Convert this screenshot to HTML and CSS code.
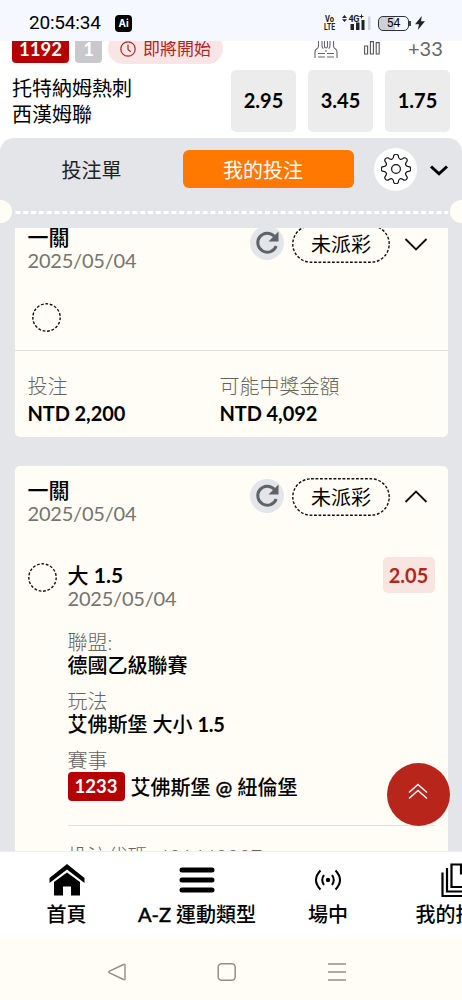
FILE: index.html
```html
<!DOCTYPE html>
<html lang="zh-Hant">
<head>
<meta charset="utf-8">
<title>我的投注</title>
<link rel="stylesheet" href="styles.css">
</head>
<body>
<div class="phone">
  <header class="status">
    <span class="clock">20:54:34</span>
    <span class="ai">Ai</span>
    <svg class="volte" width="12" height="16" viewBox="0 0 12 16"><text x="1" y="7" textLength="9" lengthAdjust="spacingAndGlyphs">Vo</text><text x="0" y="15" textLength="11" lengthAdjust="spacingAndGlyphs">LTE</text></svg>
    <svg class="signal" width="29" height="18" viewBox="0 0 29 18">
      <path d="M2.500 1L5 4H0zM2.500 8L0 5.300H5z" fill="#222"/>
      <text x="6.500" y="8" class="net">4G</text>
      <path d="M17.500 2.500h4M19.500 .5v4" stroke="#222" stroke-width="1"/>
      <path d="M8.500 10h3.500v6H8.500zM14 8.500h3.500V16H14zM19.500 6h3v10h-3z" fill="#222"/>
      <path d="M26 2.500h2.500V16H26z" fill="#cfd2d6"/>
    </svg>
    <span class="battery">54</span><i class="cap"></i>
    <svg class="bolt" width="10" height="14" viewBox="0 0 10 14"><path d="M6.800 0L0 8.200h4L2.800 14L10 5.300H6z" fill="#222"/></svg>
  </header>

  <section class="match">
    <div class="match-top">
      <span class="code">1192</span>
      <span class="code count">1</span>
      <span class="soon">
        <svg width="16" height="16" viewBox="0 0 16 16" fill="none" stroke="#b3261e" stroke-width="1.200"><circle cx="8" cy="8" r="7.200"/><path d="M8 3.500V8.500L10.700 10.700"/></svg>
        即將開始
      </span>
      <svg class="people" width="24" height="20" viewBox="0 0 24 20" fill="none" stroke="#666" stroke-width="1.100"><path d="M4.500 3V8Q4.500 10 2.500 11Q1 12 1 14V20M8 3V7.500Q8 10 9.500 10.500M10.500 3V8Q10.500 10 12 10Q13.500 10 13.500 8V3M16 3V7.500Q16 10 14.500 10.500M19.500 3V8Q19.500 10 21.500 11Q23 12 23 14V20M4 15.500H11M13 15.500H20M4 19H11M13 19H20M12 12V14"/></svg>
      <svg class="bars" width="16" height="15" viewBox="0 0 16 15" fill="none" stroke="#555" stroke-width="1.100"><path d="M.6 5h3v8H.6zM6.400 .6h3V13h-3zM12.200 1.600h3V13h-3z"/></svg>
      <span class="more">+33</span>
    </div>
    <div class="match-main">
      <div class="teams"><div>托特納姆熱刺</div><div>西漢姆聯</div></div>
      <div class="odds"><div class="odd">2.95</div><div class="odd">3.45</div><div class="odd">1.75</div></div>
    </div>
  </section>

  <main class="panel">
    <div class="tabs">
      <div class="tab">投注單</div>
      <div class="tab active">我的投注</div>
      <div class="gear"><svg width="30" height="30" viewBox="0 0 30 30" fill="none" stroke="#111" stroke-width="1.200" stroke-linejoin="round"><circle cx="15" cy="15" r="4.400"/><path d="M28.600 12.800A2.700 2.700 0 0 1 28.600 17.200Q22 17.900 26.200 23.100A2.700 2.700 0 0 1 23.100 26.200Q17.900 22 17.200 28.600A2.700 2.700 0 0 1 12.800 28.600Q12.100 22 6.900 26.200A2.700 2.700 0 0 1 3.800 23.100Q8 17.900 1.400 17.200A2.700 2.700 0 0 1 1.400 12.800Q8 12.100 3.800 6.900A2.700 2.700 0 0 1 6.900 3.800Q12.100 8 12.800 1.400A2.700 2.700 0 0 1 17.200 1.400Q17.900 8 23.100 3.800A2.700 2.700 0 0 1 26.200 6.900Q22 12.100 28.600 12.800z"/></svg></div>
      <svg class="collapse" width="18" height="11" viewBox="0 0 18 11" fill="none" stroke="#000" stroke-width="3"><path d="M1 1.500L9 8.800L17 1.500"/></svg>
    </div>
    <div class="tear"><i class="notch"></i><svg class="perf" width="438" height="4" viewBox="0 0 438 4"><path d="M3.500 2.500H436" stroke="#fff" stroke-width="3" stroke-dasharray="4.800 3"/></svg><i class="notch right"></i></div>

    <div class="tickets">
      <article class="card">
        <div class="card-head">
          <div class="heading"><div class="title">一關</div><div class="date">2025/05/04</div></div>
          <span class="refresh"><svg width="26" height="26" viewBox="0 0 26 26"><path d="M20.300 6.300A9.500 9.500 0 1 0 22.200 16" fill="none" stroke="#5f6368" stroke-width="3"/><path d="M24.500 1.500V11.500H14.500z" fill="#5f6368"/></svg></span>
          <span class="pill"><svg class="outline" width="98" height="38" viewBox="0 0 98 38"><rect x=".8" y=".8" width="96.400" height="36.400" rx="18.200"/></svg>未派彩</span>
          <svg class="chev" width="24" height="14" viewBox="0 0 24 14" fill="none" stroke="#111" stroke-width="1.900"><path d="M1.500 2L12 12.500L22.500 2"/></svg>
        </div>
        <div class="pending"><svg class="ring" width="29" height="29" viewBox="0 0 29 29"><circle cx="14.500" cy="14.500" r="13.700"/></svg></div>
        <div class="stakes">
          <div class="stake"><div class="label">投注</div><div class="amount">NTD 2,200</div></div>
          <div class="stake"><div class="label">可能中獎金額</div><div class="amount">NTD 4,092</div></div>
        </div>
      </article>

      <article class="card open">
        <div class="card-head">
          <div class="heading"><div class="title">一關</div><div class="date">2025/05/04</div></div>
          <span class="refresh"><svg width="26" height="26" viewBox="0 0 26 26"><path d="M20.300 6.300A9.500 9.500 0 1 0 22.200 16" fill="none" stroke="#5f6368" stroke-width="3"/><path d="M24.500 1.500V11.500H14.500z" fill="#5f6368"/></svg></span>
          <span class="pill"><svg class="outline" width="98" height="38" viewBox="0 0 98 38"><rect x=".8" y=".8" width="96.400" height="36.400" rx="18.200"/></svg>未派彩</span>
          <svg class="chev" width="24" height="14" viewBox="0 0 24 14" fill="none" stroke="#111" stroke-width="1.900"><path d="M1.500 12L12 1.500L22.500 12"/></svg>
        </div>
        <div class="selection">
          <svg class="ring" width="29" height="29" viewBox="0 0 29 29"><circle cx="14.500" cy="14.500" r="13.700"/></svg>
          <div class="detail">
            <div class="pick"><div><div class="title">大 <b>1.5</b></div><div class="date">2025/05/04</div></div><span class="price">2.05</span></div>
            <div class="field"><div class="label">聯盟:</div><div class="value">德國乙級聯賽</div></div>
            <div class="field"><div class="label">玩法</div><div class="value">艾佛斯堡 大小 <b>1.5</b></div></div>
            <div class="field event"><div class="label">賽事</div><div class="value"><span class="code">1233</span><span>艾佛斯堡 <span class="latin">@</span> 紐倫堡</span></div></div>
            <div class="label ref">投注代碼: 401440007</div>
          </div>
        </div>
      </article>
    </div>
    <div class="to-top"><svg width="20" height="17" viewBox="0 0 20 17" fill="none" stroke="#fff" stroke-width="1.400"><path d="M1 9.500L10 1.500L19 9.500M1 15.500L10 7.500L19 15.500"/></svg></div>
  </main>

  <nav class="nav">
    <div class="item home"><svg width="36" height="32" viewBox="0 0 36 32"><path d="M.5 14L18 0L35.500 14V19L18 5.500L.5 19z"/><path d="M5 18L18 8.500L31 18V31.500H22V22.500H14V31.500H5z"/></svg><span>首頁</span></div>
    <div class="item sports"><svg width="36" height="32" viewBox="0 0 36 32"><path d="M3 6H33M3 16H33M3 26H33" stroke="#000" stroke-width="5" stroke-linecap="round"/></svg><span><span class="latin">A-Z</span> 運動類型</span></div>
    <div class="item live"><svg width="28" height="32" viewBox="0 0 28 32" fill="none" stroke="#000" stroke-width="2"><circle cx="14" cy="16" r="2.200" fill="#000" stroke="none"/><path d="M10 11Q6.500 16 10 21M18 11Q21.500 16 18 21M6.500 6.500Q-2.500 16 6.500 25.500M21.500 6.500Q30.500 16 21.500 25.500"/></svg><span>場中</span></div>
    <div class="item mine"><svg width="34" height="34" viewBox="0 0 34 34" fill="none" stroke="#000" stroke-width="2.200"><path d="M10.500 1.500H25L32 8.500V24H10.500zM20 2V10.500H32M6 5V28.500H27M1.500 9.500V33H22"/></svg><span>我的投注</span></div>
  </nav>
  <footer class="system">
    <svg width="18" height="18" viewBox="0 0 18 18" fill="none" stroke="#918f88" stroke-width="1.400"><path d="M15.500 1.500Q17 .7 17 2.300V15.700Q17 17.300 15.500 16.500L1.500 10Q0 9 1.500 8z"/></svg>
    <svg width="20" height="18" viewBox="0 0 20 18" fill="none" stroke="#918f88" stroke-width="1.500"><rect x="1.200" y=".8" width="17" height="16.400" rx="3.500"/></svg>
    <svg width="18" height="18" viewBox="0 0 18 18" fill="none" stroke="#918f88" stroke-width="1.400"><path d="M0 1H18M0 9H18M0 17H18"/></svg>
  </footer>
</div>
</body>
</html>
```

FILE: styles.css
```css
* { box-sizing: border-box; }
body {
  margin: 0;
  font: 400 20px/24px Lato, "Noto Sans CJK TC", sans-serif;
  color: #000;
  background: #fff;
}
svg { display: block; flex: none; }
.phone { width: 462px; height: 1000px; overflow: hidden; display: flex; flex-direction: column; }

.status { height: 41px; flex: none; background: #f5f9ff; display: flex; align-items: center; padding: 5px 0 0 29px; }
.clock { width: 86px; font: 400 19px/24px Roboto, sans-serif; letter-spacing: -.2px; white-space: nowrap; }
.ai { width: 17px; height: 17px; border-radius: 4px; background: #000; color: #fff; font: 700 10px/17px Inter, sans-serif; text-align: center; }
.volte { margin-left: 192px; font: 700 8.500px Roboto, sans-serif; fill: #222; }
.signal { margin-left: 6px; }
.net { font: 700 9px Roboto, sans-serif; fill: #222; letter-spacing: -.5px; }
.battery { margin-left: 7px; width: 31px; height: 15px; border: 1px solid #333; border-radius: 5px; font: 400 12px/13px Roboto, sans-serif; text-align: center; background: linear-gradient(90deg, #cdd0d5 54%, transparent 54%); }
.cap { width: 1.500px; height: 5px; background: #444; }
.bolt { margin-left: 4px; }

.match { height: 97px; flex: none; overflow: hidden; background: #fff; padding: 0 12px; }
.match-top { height: 30px; margin-top: -8px; display: flex; align-items: center; }
.code { display: block; width: 57px; height: 29px; flex: none; border-radius: 4px; background: #b50000; color: #fff; font-weight: 700; font-size: 18.500px; line-height: 29px; text-align: center; }
.match-top .code { line-height: 31px; }
.match-top .count { width: 27px; margin-left: 6px; background: #c8c8cd; }
.soon { display: flex; align-items: center; gap: 7px; width: 115px; height: 31px; margin: 1px 0 0 6px; padding: 0 0 0 12px; border-radius: 16px; background: #f9e5e5; color: #b3261e; font-size: 17px; white-space: nowrap; }
.people { margin-left: 91px; }
.bars { margin: 0 28px 0 26px; }
.more { color: #666; line-height: 24px; }
.match-main { display: flex; margin-top: 7px; }
.teams { width: 219px; flex: none; padding-top: 5px; line-height: 26px; }
.odds { display: flex; gap: 12px; }
.odd { width: 65px; height: 62px; border-radius: 5px; background: #ececec; font-weight: 700; line-height: 61px; text-align: center; }

.panel { position: relative; height: 713px; flex: none; background: #e3e5e8; border-radius: 14px 14px 0 0; display: flex; flex-direction: column; }
.tabs { height: 62px; flex: none; display: flex; align-items: center; }
.tab { width: 183px; text-align: center; color: #222; padding-top: 1px; }
.tab.active { width: 171px; height: 38px; line-height: 38px; border-radius: 6px; background: #ff7800; color: #fff; padding-right: 11px; }
.gear { width: 43px; height: 43px; margin-left: 20px; border-radius: 50%; background: #fff; display: grid; place-items: center; }
.collapse { margin: 2px 0 0 13px; }
.tear { height: 28px; flex: none; display: flex; align-items: center; padding-bottom: 5px; }
.notch { width: 12px; height: 23px; flex: none; border-radius: 0 12px 12px 0; background: #fffdf5; }
.notch.right { border-radius: 12px 0 0 12px; }
.tickets { height: 623px; overflow: hidden; padding: 0 14.500px; }

.card { background: #fffdf5; border-radius: 5px; height: 224px; margin-top: -15px; }
.card.open { height: 500px; margin-top: 29px; }
.card-head { display: flex; padding: 12px 0 0 13px; height: 74px; }
.heading { width: 222.500px; }
.title { line-height: 23px; font-size: 21px; font-weight: 500; }
.date { line-height: 24px; color: #75746f; letter-spacing: -.2px; }
.refresh { width: 34px; height: 34px; margin-top: 1px; border-radius: 50%; background: #e3e5e8; display: grid; place-items: center; }
.pill { position: relative; width: 98px; height: 38px; margin-left: 8px; text-align: center; line-height: 38px; }
.outline { position: absolute; inset: 0; }
.outline, .ring { fill: none; stroke: #111; stroke-width: 1.400px; stroke-dasharray: 2.800px 1.700px; }
.chev { margin: 12px 0 0 14px; }
.pending { height: 64px; padding: 16px 0 0 17px; border-bottom: 1.500px solid #e2e1dc; }
.stakes { display: flex; padding: 23px 0 0 13px; }
.stake { width: 192px; }
.label { color: #65645f; font-weight: 300; line-height: 24px; }
.amount { font-weight: 700; line-height: 30px; letter-spacing: -.1px; }
.selection { display: flex; padding: 17px 13px 0; }
.selection .ring { margin-top: 6px; }
.detail { flex: 1; padding-left: 11px; }
.pick { display: flex; justify-content: space-between; padding-top: 6px; height: 73px; }
.price { width: 52px; height: 36px; margin-top: -6px; border-radius: 5px; background: #f8e5df; color: #b3261e; font-weight: 700; line-height: 37px; text-align: center; }
.field { height: 59px; }
.field .value { line-height: 23px; font-weight: 500; }
.field .value b { letter-spacing: -.4px; }
.event { height: 78px; border-bottom: 1.500px solid #e2e1dc; }
.event .value { display: flex; gap: 6px; line-height: 30px; white-space: pre; }
.latin { -webkit-text-stroke: .4px #000; }
.ref { padding-top: 18px; }
.to-top { position: absolute; left: 386.500px; top: 625px; width: 63px; height: 63px; border-radius: 50%; background: #b7251b; display: grid; place-items: center; padding-bottom: 6px; }

.nav { height: 86px; flex: none; background: #fff; display: flex; overflow: hidden; border-top: 1px solid #eee; }
.item { flex: none; display: flex; flex-direction: column; align-items: center; padding-top: 12px; font-weight: 500; white-space: nowrap; }
.item > span { padding-top: 6px; }
.home { width: 133px; }
.sports { width: 128px; }
.live { width: 134px; }
.mine { width: 121px; }
.mine svg { margin-left: 4px; margin-top: -1px; }
.mine > span { padding-top: 5px; }
.system { flex: 1; background: #fffdf5; display: flex; align-items: center; gap: 91px; padding: 7px 0 0 108px; }
```
